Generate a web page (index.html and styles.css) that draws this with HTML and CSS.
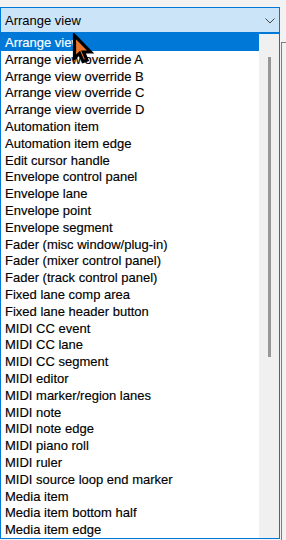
FILE: index.html
```html
<!DOCTYPE html>
<html>
<head>
<meta charset="utf-8">
<link rel="stylesheet" href="styles.css">
</head>
<body>
<div class="screen">
  <div class="dropdown">
    <div class="combo">
      <span class="combo-text">Arrange view</span>
      <svg class="chevron" width="10" height="6" viewBox="0 0 10 6"><polyline points="0.5,0.5 5,5 9.5,0.5" fill="none" stroke="#444" stroke-width="1"/></svg>
    </div>
    <div class="list">
      <ul class="items">
        <li class="selected">Arrange view</li>
        <li>Arrange view override A</li>
        <li>Arrange view override B</li>
        <li>Arrange view override C</li>
        <li>Arrange view override D</li>
        <li>Automation item</li>
        <li>Automation item edge</li>
        <li>Edit cursor handle</li>
        <li>Envelope control panel</li>
        <li>Envelope lane</li>
        <li>Envelope point</li>
        <li>Envelope segment</li>
        <li>Fader (misc window/plug-in)</li>
        <li>Fader (mixer control panel)</li>
        <li>Fader (track control panel)</li>
        <li>Fixed lane comp area</li>
        <li>Fixed lane header button</li>
        <li>MIDI CC event</li>
        <li>MIDI CC lane</li>
        <li>MIDI CC segment</li>
        <li>MIDI editor</li>
        <li>MIDI marker/region lanes</li>
        <li>MIDI note</li>
        <li>MIDI note edge</li>
        <li>MIDI piano roll</li>
        <li>MIDI ruler</li>
        <li>MIDI source loop end marker</li>
        <li>Media item</li>
        <li>Media item bottom half</li>
        <li>Media item edge</li>
      </ul>
      <div class="scrollbar"><div class="thumb"></div></div>
    </div>
  </div>
  <div class="side"><div class="side-line"></div></div>
  <svg class="cursor" width="24" height="32" viewBox="0 0 24 32"><polygon points="2.5,2.5 2.5,25 7.5,20.5 11,28.5 15,27 11.5,19 18.5,19" fill="#e8762a" stroke="#000" stroke-width="3.2" stroke-linejoin="miter"/></svg>
</div>
</body>
</html>
```
FILE: styles.css
```css
html, body {
  margin: 0;
  padding: 0;
}
body {
  font-family: "Liberation Sans", Arial, sans-serif;
  font-size: 13px;
  color: #000;
  background: #f0f0f0;
}
.screen {
  position: relative;
  display: flex;
  width: 286px;
  height: 540px;
  overflow: hidden;
  background: #f2f2f2;
}
.dropdown {
  width: 280px;
  padding-top: 7px;
  display: flex;
  flex-direction: column;
}
.combo {
  box-sizing: border-box;
  height: 26px;
  border: 1px solid #0078d7;
  background: #cce4f7;
  display: flex;
  align-items: center;
  justify-content: space-between;
  padding: 0 4px 0 4px;
}
.combo-text {
  line-height: 16px;
  padding-top: 1px;
}
.chevron {
  display: block;
  margin-top: 1px;
}
.list {
  box-sizing: border-box;
  height: 506px;
  border: 1px solid #0078d7;
  background: #fff;
  display: flex;
  overflow: hidden;
}
.items {
  flex: 1;
  list-style: none;
  margin: 0;
  padding: 0;
  overflow: hidden;
}
.items li {
  box-sizing: border-box;
  height: 16.8px;
  line-height: 16.8px;
  padding-top: 1px;
  padding-left: 4px;
  white-space: nowrap;
  -webkit-text-stroke: 0.15px currentColor;
}
.items li.selected {
  background: #0078d7;
  color: #fff;
}
.scrollbar {
  width: 20px;
  background: #f0f0f0;
  padding-top: 23px;
  box-sizing: border-box;
}
.thumb {
  width: 3px;
  height: 300px;
  margin-left: 9px;
  background: #979797;
}
.side {
  width: 6px;
}
.side-line {
  margin-top: 42px;
  margin-left: 1px;
  height: 498px;
  border-left: 1px solid #7d7d7d;
  border-top: 1px solid #7d7d7d;
}
.cursor {
  position: absolute;
  left: 72px;
  top: 33px;
}
```
